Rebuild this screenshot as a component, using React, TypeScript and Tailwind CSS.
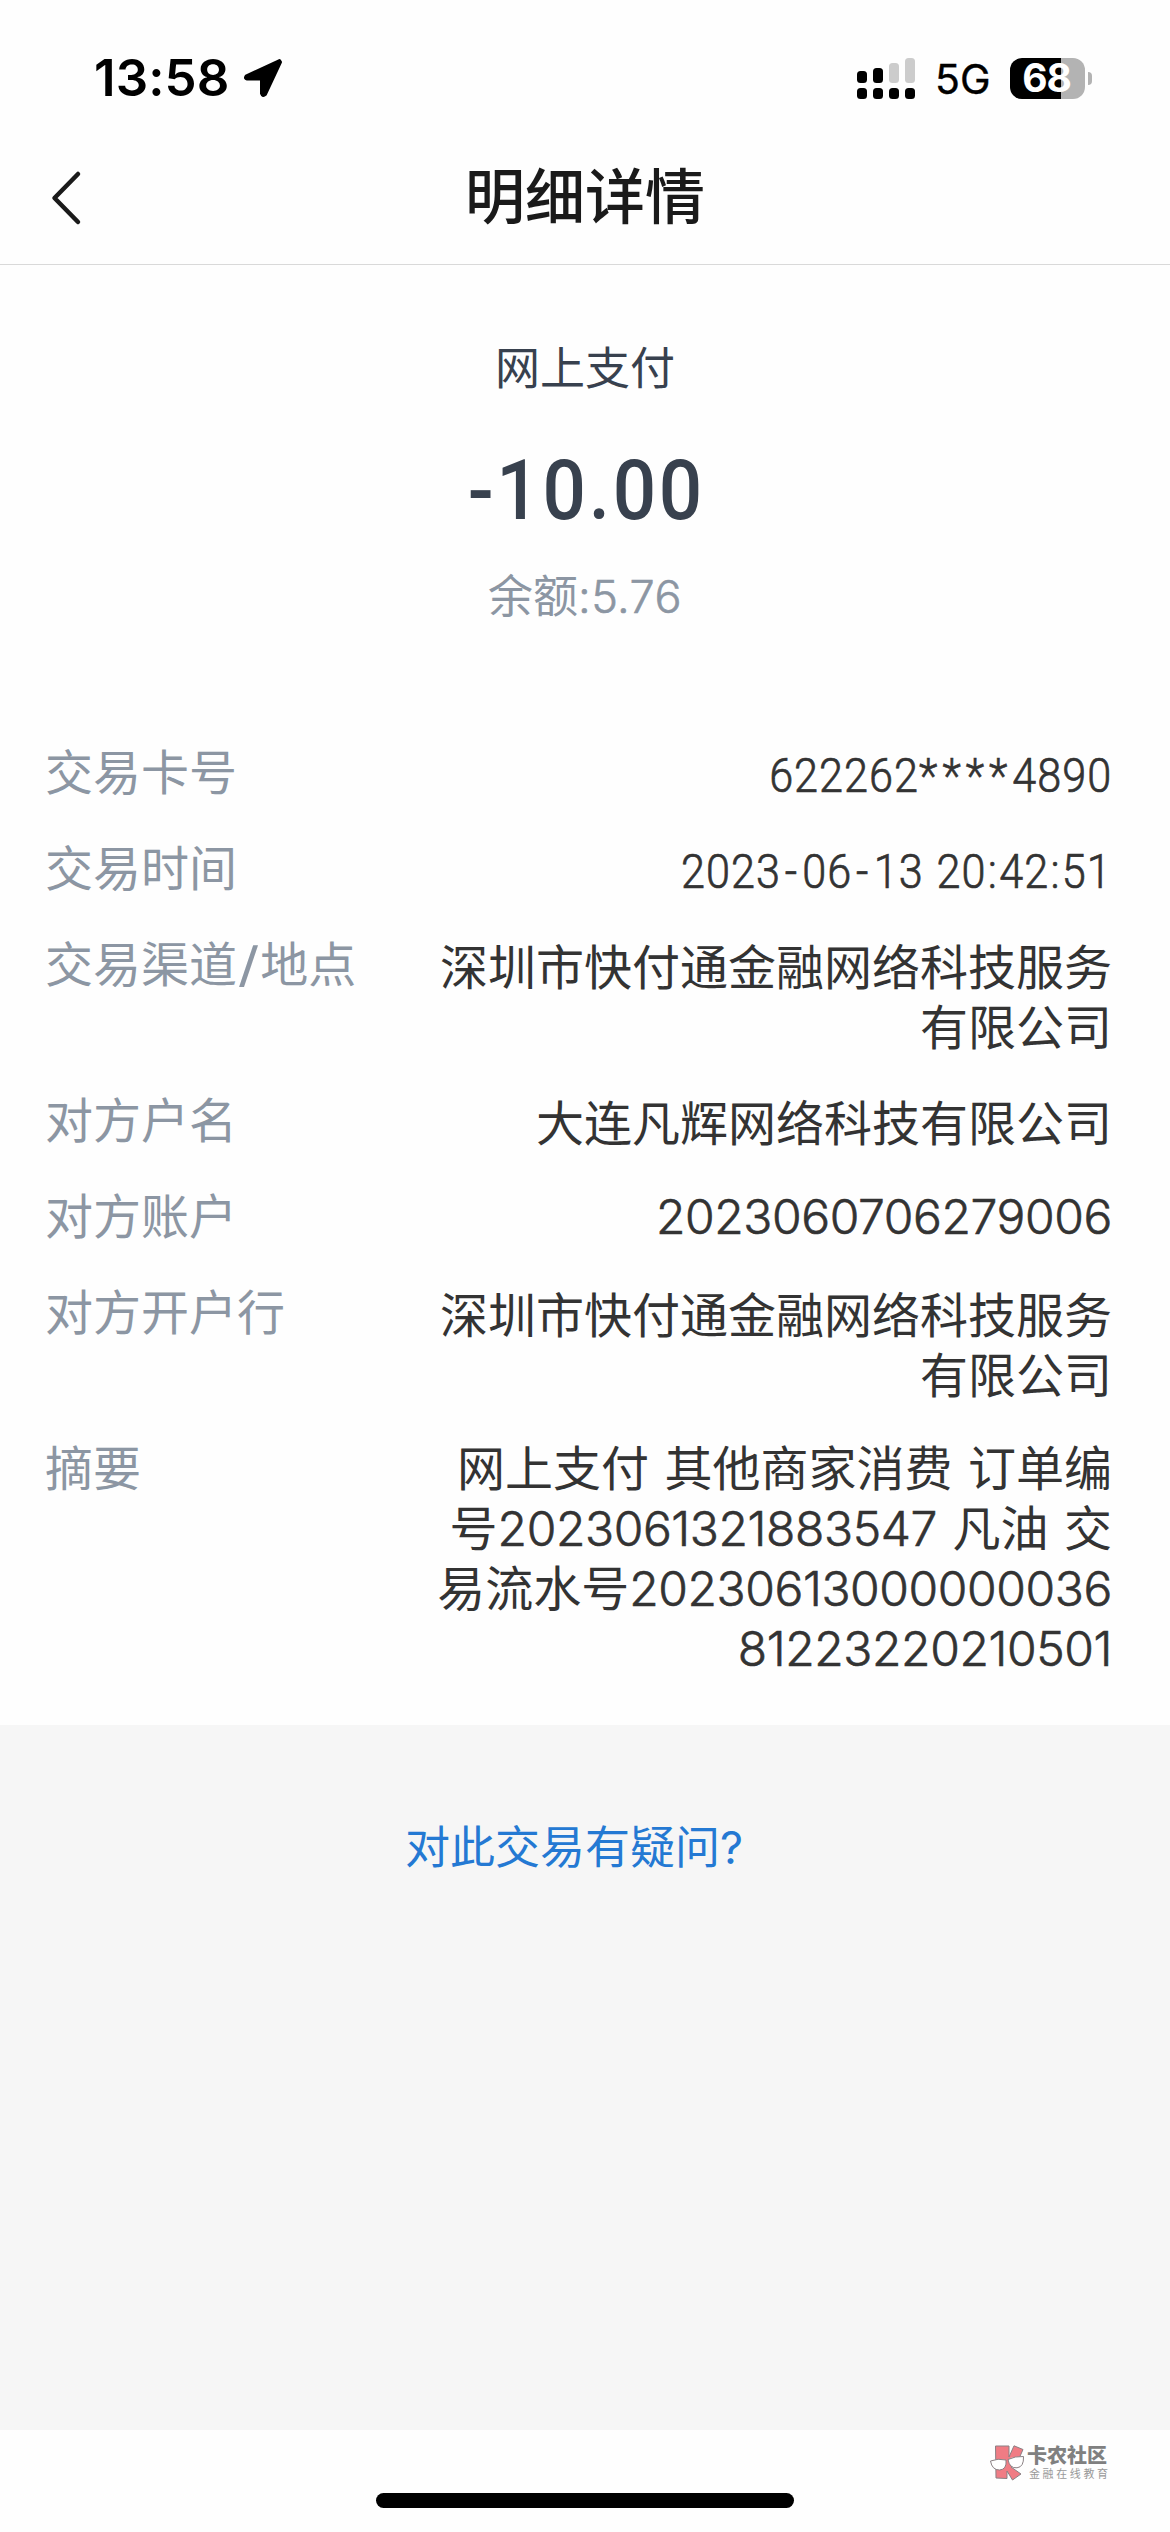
import React from "react";

type Row = { label: string; lines: string[]; pad: string; din?: boolean };

const SANS = "font-['Inter','Noto_Sans_CJK_SC',sans-serif]";

const rows: Row[] = [
  { label: "交易卡号", pad: "pt-[3px]", din: true, lines: ["622262****4890"] },
  { label: "交易时间", pad: "pt-[3px]", din: true, lines: ["2023-06-13 20:42:51"] },
  { label: "交易渠道/地点", pad: "pt-[3px]", lines: ["深圳市快付通金融网络科技服务", "有限公司"] },
  { label: "对方户名", pad: "pt-[3px]", lines: ["大连凡辉网络科技有限公司"] },
  { label: "对方账户", pad: "pt-0", lines: ["2023060706279006"] },
  { label: "对方开户行", pad: "pt-[3px]", lines: ["深圳市快付通金融网络科技服务", "有限公司"] },
  {
    label: "摘要",
    pad: "pt-0",
    lines: ["网上支付 其他商家消费 订单编", "号2023061321883547 凡油 交", "易流水号20230613000000036", "81223220210501"],
  },
];

// Separators in the condensed figures are set wider than the digits' own tracking.
const dinTracking: Record<string, string> = {
  "*": "tracking-[5.5px]",
  "-": "tracking-[5.8px] pl-[4.2px]",
  ":": "tracking-[2.6px] pl-[1.4px]",
  " ": "tracking-[2.6px]",
};

function DinText({ text }: { text: string }) {
  return (
    <div className="h-[60px] origin-right scale-x-[0.9] whitespace-pre font-['Roboto',sans-serif] font-light tracking-[1.15px] [-webkit-text-stroke:0.7px_#333]">
      {text.split(/([*\-: ])/).map((part, i) => (
        <span key={i} className={dinTracking[part] ?? ""}>
          {part}
        </span>
      ))}
    </div>
  );
}

function PlainText({ text }: { text: string }) {
  return (
    <div className="h-[60px] whitespace-nowrap [word-spacing:2px]">
      {text.split(/(\d+)/).map((part, i) =>
        /^\d+$/.test(part) ? (
          <span key={i} className="font-light tracking-[-0.4px] [-webkit-text-stroke:0.6px_#333]">
            {part}
          </span>
        ) : (
          <span key={i}>{part}</span>
        ),
      )}
    </div>
  );
}

function Label({ text }: { text: string }) {
  return (
    <div className="whitespace-nowrap text-[#8c96a3]">
      {text.split(/(\/)/).map((part, i) => (
        <span key={i} className={part === "/" ? "inline-block scale-x-125 px-[3px] font-normal" : ""}>
          {part}
        </span>
      ))}
    </div>
  );
}

function Signal() {
  const bars = [
    { y: 13, h: 12, c: "#000" },
    { y: 10, h: 15, c: "#000" },
    { y: 5, h: 20, c: "#ccc" },
    { y: 0, h: 25, c: "#ccc" },
  ];
  return (
    <svg width="58" height="41" viewBox="0 0 58 41">
      {bars.map((b, i) => (
        <g key={i}>
          <rect x={i * 16} y={b.y} width="10" height={b.h} rx="3.5" fill={b.c} />
          <rect x={i * 16} y="30" width="10" height="11" rx="3.5" fill="#000" />
        </g>
      ))}
    </svg>
  );
}

function StatusBar() {
  return (
    <div className="flex h-[154px] items-start justify-between pl-[94px] pr-[78px] pt-[48px]">
      <div className="flex h-[60px] items-center">
        <span className="w-[136px] whitespace-nowrap text-[51px] font-semibold leading-[60px] tracking-[0.1px] text-black">13:58</span>
        <svg className="ml-[13px]" width="40" height="40" viewBox="0 0 40 40">
          <path d="M36.500 2.500 L3 18.200 Q1.500 20.500 4 21 L18.500 21 L18.500 35.500 Q19.800 39 22.300 36.500 L37.500 4 Z" fill="#000" stroke="#000" strokeWidth="3" strokeLinejoin="round" />
        </svg>
      </div>
      <div className="flex h-[60px] items-center">
        <Signal />
        <span className="ml-[20px] w-[55px] whitespace-nowrap pt-[2px] text-[41px] font-normal leading-[60px] text-black [-webkit-text-stroke:0.4px_black]">5G</span>
        <div className="ml-[20px] flex h-[41px] w-[75px] items-center justify-center rounded-[12px] bg-[linear-gradient(90deg,#000_51px,#b3b3b3_51px)]">
          <span className="pr-[2px] text-[39px] font-bold leading-[50px] tracking-[-1px] text-white">68</span>
        </div>
        <div className="ml-[3px] h-[13px] w-[4px] rounded-r-full bg-[#b3b3b3]" />
      </div>
    </div>
  );
}

function Logo() {
  return (
    <svg width="34" height="36" viewBox="0 0 34 36" stroke="#8a8084" strokeWidth="1" strokeLinejoin="round">
      <path d="M5.500 1 H19 V12 L24 0.800 L33 4.500 L27 18 L21 22 L31 29 L22.500 35 L17 26 V33.500 L6 33 Z" fill="#f07c84" />
      <path d="M0.500 16 Q8 13 16 15 Q17 24.500 9.500 25 Q2 25 0.500 16 Z" fill="#fff" />
      <path d="M18 14.500 Q25 11 33.500 11.500 Q34 22 27 22.800 Q19.500 23.500 18 14.500 Z" fill="#fff" />
    </svg>
  );
}

export default function App() {
  return (
    <div className={`flex h-[2532px] w-[1170px] flex-col overflow-hidden bg-[#fefefe] ${SANS}`}>
      <StatusBar />
      <header className="grid h-[111px] grid-cols-[1fr_auto_1fr] items-start border-b border-[#d9d9d9] pt-[13px]">
        <svg className="ml-[50px] mt-[3px]" width="32" height="56" viewBox="0 0 32 56" fill="none" stroke="#1a1a1a" strokeWidth="4.500" strokeLinecap="round" strokeLinejoin="round">
          <path d="M28 4 L4.500 28 L28 52" />
        </svg>
        <h1 className="whitespace-nowrap text-[60px] font-medium leading-[60px] text-[#1a1a1a]">明细详情</h1>
        <div />
      </header>

      <section className="flex flex-col items-center pt-[74px]">
        <div className="h-[60px] text-[45px] leading-[60px] text-[#38414e]">网上支付</div>
        <div className="mt-[42px] h-[100px] origin-center scale-x-[0.91] whitespace-nowrap pl-[2px] font-['Roboto',sans-serif] text-[84px] font-medium leading-[100px] tracking-[3px] text-[#38414e]">-10.00</div>
        <div className="mt-[26px] h-[60px] text-[45px] leading-[60px] text-[#8c96a3]">
          余额<span className="font-light tracking-[0.4px] [-webkit-text-stroke:0.6px_#8c96a3]">:5.76</span>
        </div>
      </section>

      <section className="flex flex-col gap-[36px] pl-[45px] pr-[58px] pt-[116px]">
        {rows.map((r) => (
          <div key={r.label} className="flex items-start justify-between text-[48px] leading-[60px]">
            <Label text={r.label} />
            <div className={`-mb-[3px] flex flex-col items-end text-[#333] ${r.pad}`}>
              {r.lines.map((l) => (r.din ? <DinText key={l} text={l} /> : <PlainText key={l} text={l} />))}
            </div>
          </div>
        ))}
      </section>

      <div className="mt-auto h-[705px] shrink-0 bg-[#f6f6f6] pl-[405px] pt-[90px]">
        <a className="text-[45px] leading-[66px] text-[#2479d3]">对此交易有疑问?</a>
      </div>
      <footer className="flex h-[102px] shrink-0 flex-col">
        <div className="flex h-[63px] items-start pl-[990px] pt-[15px]">
          <Logo />
          <div className="ml-[3px] flex flex-col text-[#808080]">
            <span className="h-[22px] whitespace-nowrap text-[20px] font-black leading-[22px]">卡农社区</span>
            <span className="ml-[2px] whitespace-nowrap text-[11px] leading-[14px] tracking-[2.6px] text-[#999]">金融在线教育</span>
          </div>
        </div>
        <div className="mx-auto h-[15px] w-[418px] rounded-full bg-black" />
      </footer>
    </div>
  );
}
